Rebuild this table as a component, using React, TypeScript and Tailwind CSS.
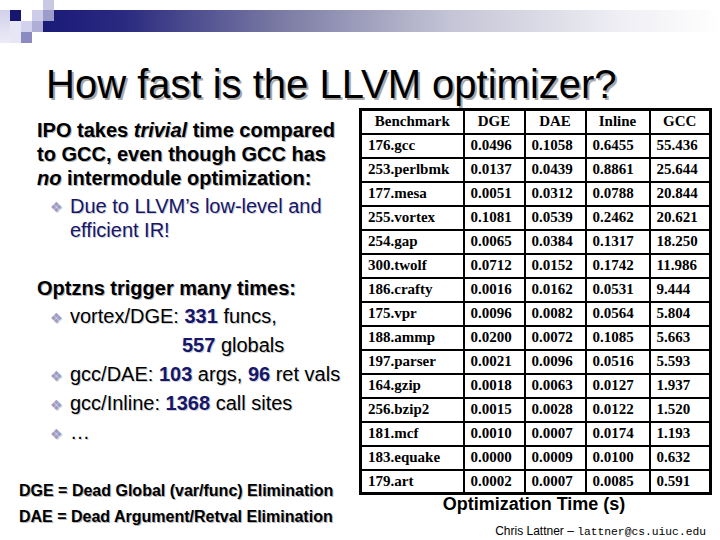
import React from "react";

const rows: string[][] = [
  ["176.gcc", "0.0496", "0.1058", "0.6455", "55.436"],
  ["253.perlbmk", "0.0137", "0.0439", "0.8861", "25.644"],
  ["177.mesa", "0.0051", "0.0312", "0.0788", "20.844"],
  ["255.vortex", "0.1081", "0.0539", "0.2462", "20.621"],
  ["254.gap", "0.0065", "0.0384", "0.1317", "18.250"],
  ["300.twolf", "0.0712", "0.0152", "0.1742", "11.986"],
  ["186.crafty", "0.0016", "0.0162", "0.0531", "9.444"],
  ["175.vpr", "0.0096", "0.0082", "0.0564", "5.804"],
  ["188.ammp", "0.0200", "0.0072", "0.1085", "5.663"],
  ["197.parser", "0.0021", "0.0096", "0.0516", "5.593"],
  ["164.gzip", "0.0018", "0.0063", "0.0127", "1.937"],
  ["256.bzip2", "0.0015", "0.0028", "0.0122", "1.520"],
  ["181.mcf", "0.0010", "0.0007", "0.0174", "1.193"],
  ["183.equake", "0.0000", "0.0009", "0.0100", "0.632"],
  ["179.art", "0.0002", "0.0007", "0.0085", "0.591"],
];

const headers = ["Benchmark", "DGE", "DAE", "Inline", "GCC"];

function Header() {
  return (
    <svg width="720" height="43" viewBox="0 0 720 43" className="block">
      <defs>
        <linearGradient id="bar" x1="0" y1="0" x2="1" y2="0">
          <stop offset="0%" stopColor="#1a1a78" />
          <stop offset="12%" stopColor="#2a2a80" />
          <stop offset="35%" stopColor="#7a7aa4" />
          <stop offset="60%" stopColor="#c4c4d6" />
          <stop offset="85%" stopColor="#eeeef4" />
          <stop offset="100%" stopColor="#ffffff" />
        </linearGradient>
        <linearGradient id="strip" x1="0" y1="0" x2="0" y2="1">
          <stop offset="0%" stopColor="#d0d0ea" />
          <stop offset="100%" stopColor="#ececf6" />
        </linearGradient>
      </defs>
      <rect x="43" y="10" width="677" height="22" fill="url(#bar)" />
      <rect x="0" y="10" width="10" height="33" fill="url(#strip)" />
      <rect x="10" y="21" width="11" height="22" fill="#e6e6f4" />
      <rect x="10" y="10" width="11" height="11" fill="#16166e" />
      <rect x="32" y="10" width="11" height="11" fill="#cdcdea" />
      <rect x="43" y="0" width="11" height="10" fill="#c9c9e4" />
      <rect x="43" y="10" width="11" height="11" fill="#9d9dcb" />
      <rect x="21" y="21" width="11" height="11" fill="#d2d2ec" />
      <rect x="32" y="21" width="11" height="11" fill="#afafd6" />
      <rect x="21" y="32" width="11" height="11" fill="#8b8bc2" />
    </svg>
  );
}

function Bullet() {
  return (
    <span className="w-[20px] shrink-0 text-[14px] text-[#9c9cc8] font-['DejaVu_Sans',sans-serif] leading-none pt-[2px]">
      ❖
    </span>
  );
}

export default function App() {
  const boldShadow = "[text-shadow:1px_1px_0_#b4b4b4]";
  const lightShadow = "[text-shadow:1px_1px_0_#d0d0d0]";
  return (
    <div className="w-[720px] h-[540px] bg-white overflow-hidden font-['Liberation_Sans',Arial,sans-serif] text-black">
      <Header />
      <div className="mt-[21px] pl-[46px] h-[40px] text-[40px] leading-none text-black [text-shadow:2px_2px_0_#a8a8a8] whitespace-nowrap">
        How fast is the LLVM optimizer?
      </div>
      <div className="flex">
        {/* Left column */}
        <div className="w-[359px] shrink-0 flex flex-col">
          <div className={`mt-[14px] pl-[37px] text-[20px] leading-[24px] font-bold whitespace-nowrap ${boldShadow}`}>
            IPO takes <i>trivial</i> time compared
            <br />
            to GCC, even though GCC has
            <br />
            <i>no</i> intermodule optimization:
          </div>
          <div className={`mt-[4px] pl-[50px] flex items-center text-[20px] leading-[24px] text-[#16166a] whitespace-nowrap ${lightShadow}`}>
            <Bullet />
            <span>Due to LLVM’s low-level and</span>
          </div>
          <div className={`pl-[70px] text-[20px] leading-[24px] text-[#16166a] whitespace-nowrap ${lightShadow}`}>
            efficient IR!
          </div>

          <div className={`mt-[34px] pl-[37px] text-[20px] leading-[24px] font-bold whitespace-nowrap ${boldShadow}`}>
            Optzns trigger many times:
          </div>
          <div className={`mt-[2px] flex flex-col text-[20px] leading-[29px] whitespace-nowrap ${lightShadow}`}>
            <div className="pl-[50px] flex items-center">
              <Bullet />
              <span>
                vortex/DGE: <b className="text-[#16166a]">331</b> funcs,
              </span>
            </div>
            <div className="pl-[182px]">
              <b className="text-[#16166a]">557</b> globals
            </div>
            <div className="pl-[50px] flex items-center">
              <Bullet />
              <span>
                gcc/DAE: <b className="text-[#16166a]">103</b> args, <b className="text-[#16166a]">96</b> ret vals
              </span>
            </div>
            <div className="pl-[50px] flex items-center">
              <Bullet />
              <span>
                gcc/Inline: <b className="text-[#16166a]">1368</b> call sites
              </span>
            </div>
            <div className="pl-[50px] flex items-center">
              <Bullet />
              <span>…</span>
            </div>
          </div>

          <div className={`mt-[31px] pl-[19px] text-[16px] leading-[26px] font-bold whitespace-nowrap ${boldShadow}`}>
            DGE = Dead Global (var/func) Elimination
            <br />
            DAE = Dead Argument/Retval Elimination
          </div>
        </div>

        {/* Right column */}
        <div className="flex flex-col flex-1">
          <table className="mt-[4px] w-[350px] table-fixed border-collapse border-[3px] border-black font-['Liberation_Serif','Times_New_Roman',serif] font-bold text-[15px] leading-none">
            <colgroup>
              <col className="w-[103px]" />
              <col className="w-[61px]" />
              <col className="w-[61px]" />
              <col className="w-[64px]" />
              <col className="w-[61px]" />
            </colgroup>
            <thead>
              <tr className="h-[24px]">
                {headers.map((h) => (
                  <th key={h} className="border-2 border-black p-0 text-center font-bold">
                    {h}
                  </th>
                ))}
              </tr>
            </thead>
            <tbody>
              {rows.map((r) => (
                <tr key={r[0]} className="h-[24px]">
                  {r.map((c, i) => (
                    <td key={i} className="border-2 border-black p-0 pl-[6px] text-left whitespace-nowrap">
                      {c}
                    </td>
                  ))}
                </tr>
              ))}
            </tbody>
          </table>
          <div className="w-[350px] text-center text-[18px] leading-[18px] font-bold whitespace-nowrap">
            Optimization Time (s)
          </div>
          <div className="mt-[11px] pr-[14px] flex justify-end items-baseline leading-[14px] whitespace-nowrap">
            <span className="text-[12px]">Chris Lattner –&nbsp;</span>
            <span className="text-[11.3px] font-['Liberation_Mono','Courier_New',monospace]">lattner@cs.uiuc.edu</span>
          </div>
        </div>
      </div>
    </div>
  );
}
